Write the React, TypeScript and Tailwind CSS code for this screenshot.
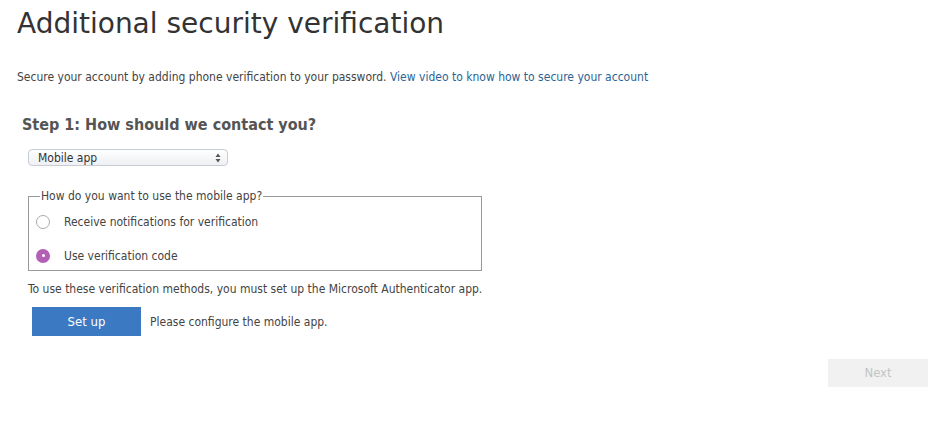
export default function App() {
  const font = { fontFamily: "'DejaVu Sans Condensed', 'DejaVu Sans', sans-serif" };
  return (
    <div className="w-[949px] h-[437px] bg-white text-[#333]" style={font}>
      <div className="px-[17px] pt-[6px]">
        <h1 className="text-[28px] leading-[36px] font-normal text-[#333]" style={{ fontFamily: "'DejaVu Sans', sans-serif" }}>
          Additional security verification
        </h1>
        <p className="mt-[27px] text-[12px] leading-[16px] text-[#444]">
          Secure your account by adding phone verification to your password.{" "}
          <a className="text-[#2a6496]">View video to know how to secure your account</a>
        </p>
      </div>

      <div className="pl-[22px] pt-[30px]">
        <h2 className="text-[16px] leading-[20px] font-bold text-[#555]">Step 1: How should we contact you?</h2>
      </div>

      <div className="pl-[28px] pr-[467px]">
        <div className="mt-[14px] w-[200px] h-[17px] rounded-[4px] border border-[#c8ccd4] bg-gradient-to-b from-white to-[#eef0f4] flex items-center justify-between pl-[9px] pr-[6px]">
          <span className="text-[12px] leading-none text-[#333]">Mobile app</span>
          <svg width="6" height="10" viewBox="0 0 6 10">
            <path d="M3 0.5 L5.5 4 H0.5 Z" fill="#555" />
            <path d="M3 9.5 L5.5 6 H0.5 Z" fill="#555" />
          </svg>
        </div>

        <fieldset className="mt-[23px] border border-[#999] px-[7px] pb-[4px] pt-0 min-w-0">
          <legend className="text-[12px] leading-[14px] text-[#444] px-[1px] ml-[4px]">How do you want to use the mobile app?</legend>
          <label className="flex items-center h-[21px] mt-[8px]">
            <span className="w-[14px] h-[14px] rounded-full border border-[#aaa] bg-white" />
            <span className="ml-[14px] text-[12px] text-[#444]">Receive notifications for verification</span>
          </label>
          <label className="flex items-center h-[21px] mt-[13px]">
            <span className="w-[14px] h-[14px] rounded-full bg-[#b35fb6] flex items-center justify-center">
              <span className="w-[3px] h-[3px] rounded-full bg-white" />
            </span>
            <span className="ml-[14px] text-[12px] text-[#444]">Use verification code</span>
          </label>
        </fieldset>

        <p className="mt-[10px] text-[12px] leading-[16px] text-[#444] whitespace-nowrap">
          To use these verification methods, you must set up the Microsoft Authenticator app.
        </p>

        <div className="mt-[10px] flex items-center pl-[4px]">
          <button className="w-[109px] h-[29px] bg-[#3b79c3] text-white text-[13px]">Set up</button>
          <span className="ml-[9px] text-[12px] text-[#444] whitespace-nowrap">Please configure the mobile app.</span>
        </div>
      </div>

      <div className="flex justify-end pr-[21px] mt-[23px]">
        <button className="w-[100px] h-[28px] bg-[#f1f1f1] text-[#c4c4c4] text-[13px]">Next</button>
      </div>
    </div>
  );
}
